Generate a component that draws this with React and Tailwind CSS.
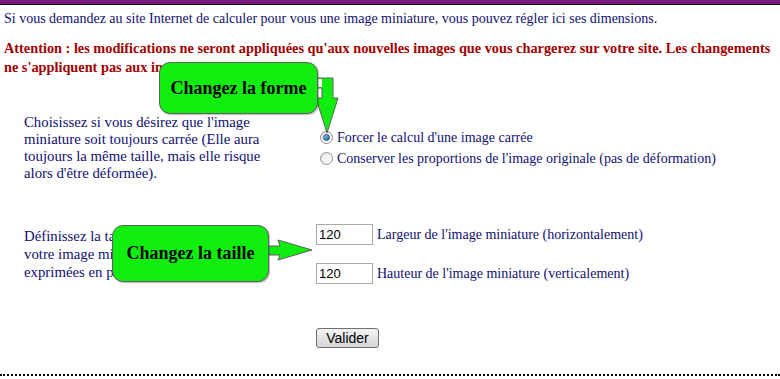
import React from 'react';

const serif = "font-['Liberation_Serif','Times_New_Roman',serif]";
const sans = "font-['Liberation_Sans',Arial,sans-serif]";

// Windows-style radio button
const Radio = ({ checked }) => (
  <span className="flex h-[13px] w-[13px] shrink-0 items-center justify-center rounded-full border border-[#8e8f8f] bg-gradient-to-br from-[#e6e6e6] to-[#ffffff]">
    {checked && (
      <span className="h-[7px] w-[7px] rounded-full border border-[#1c4f7a] bg-gradient-to-br from-[#8fd0f5] to-[#1a5d94]" />
    )}
  </span>
);

const SizeInput = ({ value }) => (
  <input
    readOnly
    value={value}
    className={`h-[21px] w-[57px] border border-[#a9a9a9] bg-white px-[2px] text-[13px] text-black outline-none ${sans}`}
  />
);

const Callout = ({ children, className }) => (
  <div
    className={`absolute flex items-center justify-center rounded-[11px] border border-[#5f5f5f] bg-[#10ee10] text-[18px] font-bold text-black shadow-[1px_1px_1px_rgba(0,0,0,0.25)] ${serif} ${className}`}
  >
    {children}
  </div>
);

export default function App() {
  return (
    <div className={`relative h-[379px] w-[780px] overflow-hidden bg-white text-[14px] text-[#10106e] ${serif}`}>
      {/* page title strip, cut off at the top */}
      <div className="h-[5px] border-b-[1px] border-black bg-[#7a1a7c]" />

      <p className="mt-[5px] whitespace-nowrap pl-[4px] text-[14px] leading-[17px]">
        Si vous demandez au site Internet de calculer pour vous une image miniature, vous pouvez régler ici ses dimensions.
      </p>

      <p className="mt-[12px] whitespace-nowrap pl-[4px] text-[14.3px] font-bold leading-[19px] text-[#a00000]">
        Attention : les modifications ne seront appliquées qu'aux nouvelles images que vous chargerez sur votre site. Les changements
        <br />
        ne s'appliquent pas aux images déjà envoyées.
      </p>

      {/* form settings */}
      <div className="mt-[37px] grid grid-cols-[316px_1fr]">
        <div className="whitespace-nowrap pl-[24px] text-[14.8px] leading-[17px]">
          <p>
            Choisissez si vous désirez que l'image
            <br />
            miniature soit toujours carrée (Elle aura
            <br />
            toujours la même taille, mais elle risque
            <br />
            alors d'être déformée).
          </p>
        </div>
        <div className="flex flex-col gap-[4px] pt-[15px] pl-[4px] leading-[17px]">
          <label className="flex items-center gap-[4px]">
            <Radio checked />
            <span>Forcer le calcul d'une image carrée</span>
          </label>
          <label className="flex items-center gap-[4px]">
            <Radio />
            <span>Conserver les proportions de l'image originale (pas de déformation)</span>
          </label>
        </div>

        <div className="mt-[45px] whitespace-nowrap pl-[24px] text-[14.8px] leading-[18px]">
          <p>
            Définissez la taille maximale de
            <br />
            votre image miniature. Les valeurs sont
            <br />
            exprimées en pixels.
          </p>
        </div>
        <div className="mt-[42px] flex flex-col gap-[18px]">
          <div className="flex items-center gap-[4px]">
            <SizeInput value="120" />
            <span>Largeur de l'image miniature (horizontalement)</span>
          </div>
          <div className="flex items-center gap-[4px]">
            <SizeInput value="120" />
            <span>Hauteur de l'image miniature (verticalement)</span>
          </div>
        </div>

        <div />
        <div className="mt-[44px]">
          <button
            className={`h-[20px] w-[63px] rounded-[3px] border border-[#707070] bg-gradient-to-b from-[#f3f3f3] to-[#d6d6d6] text-[14px] leading-none text-black ${sans}`}
          >
            Valider
          </button>
        </div>
      </div>

      <div className="absolute bottom-[3px] left-0 right-0 border-t-2 border-dotted border-black" />

      {/* help callouts */}
      <svg className="absolute left-0 top-0" width="780" height="379">
        <polygon
          points="300,78 333,78 333,98 338,98 327,133 316,98 322,98 322,88 300,88"
          fill="#10ee10"
          stroke="#5f5f5f"
          strokeWidth="1"
        />
        <rect x="316" y="79" width="6" height="8" fill="#ffffff" />
        <polygon
          points="260,246 280,246 278,240 312,250 278,260 280,255 260,255"
          fill="#10ee10"
          stroke="#5f5f5f"
          strokeWidth="1"
        />
      </svg>
      <Callout className="left-[159px] top-[62px] h-[52px] w-[159px]">Changez la forme</Callout>
      <Callout className="left-[112px] top-[225px] h-[57px] w-[157px]">Changez la taille</Callout>
    </div>
  );
}
